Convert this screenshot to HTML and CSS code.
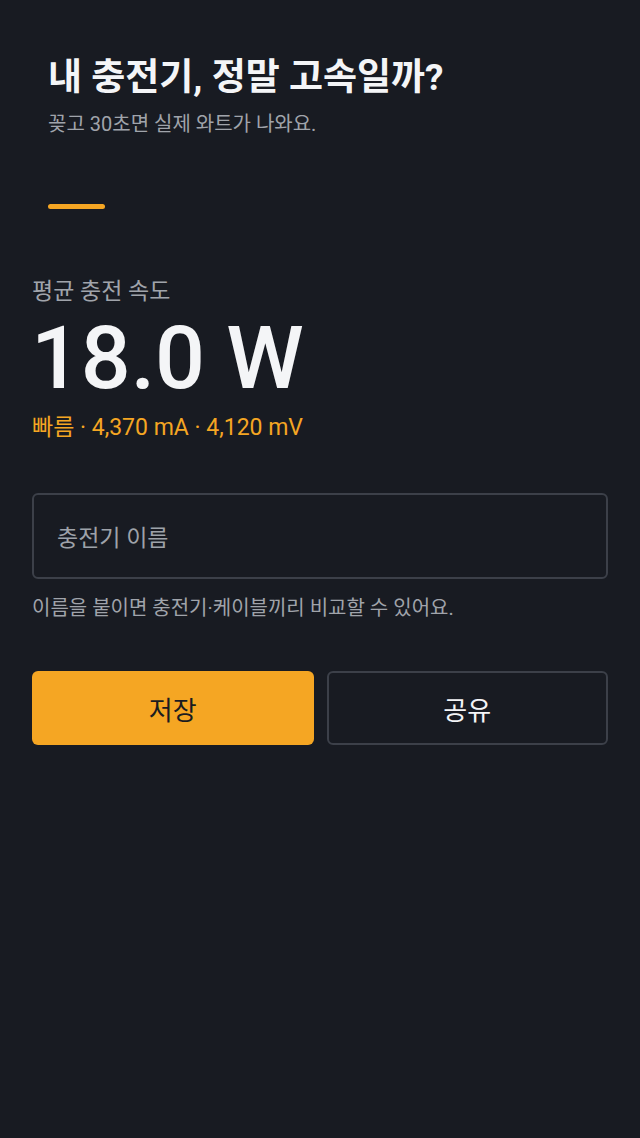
FILE: index.html
```html
<!DOCTYPE html>
<html lang="ko">
<head>
<meta charset="utf-8">
<meta name="viewport" content="width=device-width, initial-scale=1">
<title>충전기 속도</title>
<link rel="stylesheet" href="styles.css">
</head>
<body>
<main class="screen">
  <header class="header">
    <h1 class="title">내 충전기, 정말 고속일까?</h1>
    <p class="subtitle">꽂고 30초면 실제 와트가 나와요.</p>
    <div class="progress"></div>
  </header>

  <section class="result">
    <div class="label">평균 충전 속도</div>
    <div class="watts">18.0 W</div>
    <div class="stats">빠름 · 4,370 mA · 4,120 mV</div>
  </section>

  <section class="name">
    <div class="input"><span class="placeholder">충전기 이름</span></div>
    <p class="helper">이름을 붙이면 충전기·케이블끼리 비교할 수 있어요.</p>
  </section>

  <div class="actions">
    <button class="btn btn-primary">저장</button>
    <button class="btn btn-outline">공유</button>
  </div>
</main>
</body>
</html>
```

FILE: styles.css
```css
html, body {
  margin: 0;
  padding: 0;
  background: #181b22;
}
body {
  font-family: Roboto, "Noto Sans CJK KR", sans-serif;
  color: #f2f3f5;
  width: 640px;
  height: 1138px;
}
.screen {
  padding: 0 32px;
}
.header {
  padding: 56px 16px 0;
}
.title {
  margin: 0;
  font-size: 37px;
  font-weight: 700;
  line-height: 44px;
  color: #f4f5f7;
}
.subtitle {
  margin: 10px 0 0;
  font-size: 20px;
  line-height: 28px;
  color: #a0a4ab;
}
.progress {
  margin-top: 66px;
  width: 57px;
  height: 5px;
  border-radius: 3px;
  background: #f5a623;
}
.result {
  margin-top: 67px;
}
.label {
  font-size: 23px;
  line-height: 32px;
  color: #a0a4ab;
}
.watts {
  font-family: Roboto, sans-serif;
  font-size: 88px;
  font-weight: 500;
  line-height: 100px;
  letter-spacing: -0.2px;
  color: #f4f5f7;
  margin-left: -1px;
}
.stats {
  font-size: 23px;
  line-height: 32px;
  color: #f5a623;
  margin-top: 4px;
}
.name {
  margin-top: 49px;
}
.input {
  box-sizing: border-box;
  height: 86px;
  border: 2px solid #3c4049;
  border-radius: 6px;
  display: flex;
  align-items: center;
  padding: 0 23px;
}
.placeholder {
  font-size: 23px;
  color: #9ea2a9;
}
.helper {
  margin: 15px 0 0;
  font-size: 20px;
  line-height: 28px;
  color: #a0a4ab;
}
.actions {
  margin-top: 49px;
  display: grid;
  grid-template-columns: 1fr 1fr;
  gap: 13px;
}
.btn {
  box-sizing: border-box;
  height: 74px;
  border-radius: 6px;
  font-family: Roboto, "Noto Sans CJK KR", sans-serif;
  font-size: 26px;
  cursor: pointer;
}
.btn-primary {
  background: #f5a623;
  border: none;
  color: #1b1c20;
}
.btn-outline {
  background: transparent;
  border: 2px solid #3c4049;
  color: #f4f5f7;
}
```
